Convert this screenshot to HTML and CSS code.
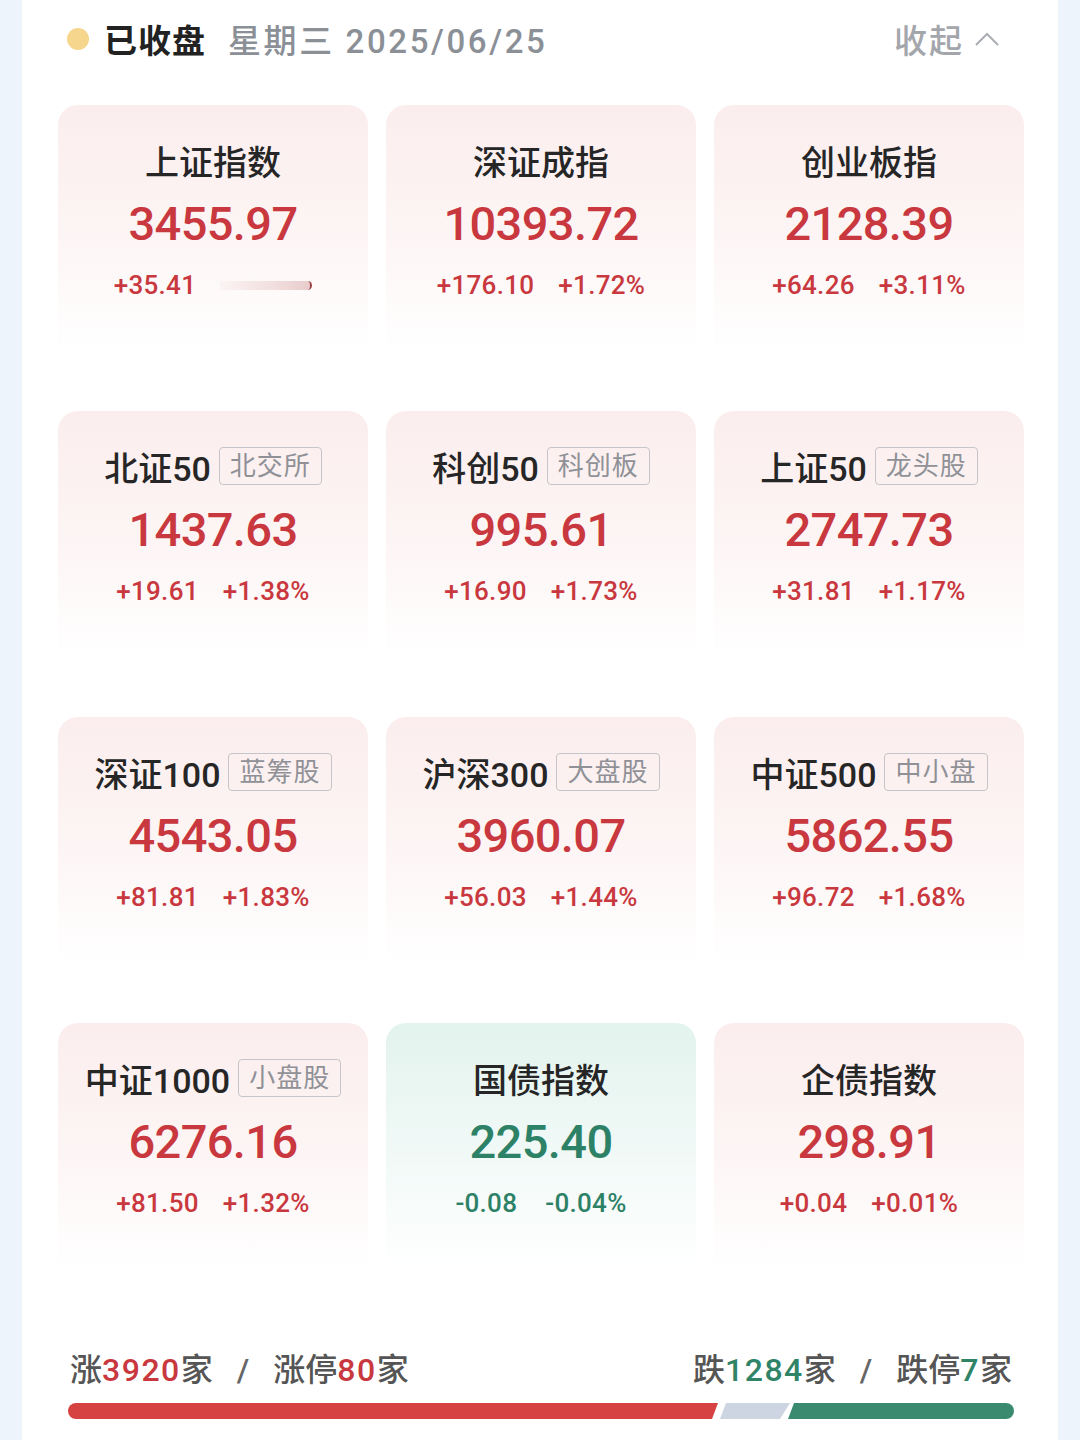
FILE: index.html
```html
<!DOCTYPE html>
<html lang="zh-CN">
<head>
  <meta charset="UTF-8" />
  <meta name="viewport" content="width=device-width, initial-scale=1" />
  <title>大盘指数</title>
  <link rel="stylesheet" href="styles.css">
</head>
<body>

<div class="panel">
  <header class="top">
    <div class="status">
      <span class="dot"></span>
      <span class="closed">已收盘</span>
      <span class="date">星期三 2025/06/25</span>
    </div>
    <a href="#" class="fold">收起
      <svg width="26" height="18" viewBox="0 0 26 18"><path d="M2 15 L13 4 L24 15" fill="none" stroke="#aaadb3" stroke-width="2"/></svg>
    </a>
  </header>

  <section class="grid">
    <div class="card up">
      <div class="name">上证指数</div>
      <div class="value">3455.97</div>
      <div class="change"><span>+35.41</span><span class="loading"></span></div>
    </div>
    <div class="card up">
      <div class="name">深证成指</div>
      <div class="value">10393.72</div>
      <div class="change"><span>+176.10</span><span>+1.72%</span></div>
    </div>
    <div class="card up">
      <div class="name">创业板指</div>
      <div class="value">2128.39</div>
      <div class="change"><span>+64.26</span><span>+3.11%</span></div>
    </div>

    <div class="card up">
      <div class="name">北证50<span class="tag">北交所</span></div>
      <div class="value">1437.63</div>
      <div class="change"><span>+19.61</span><span>+1.38%</span></div>
    </div>
    <div class="card up">
      <div class="name">科创50<span class="tag">科创板</span></div>
      <div class="value">995.61</div>
      <div class="change"><span>+16.90</span><span>+1.73%</span></div>
    </div>
    <div class="card up">
      <div class="name">上证50<span class="tag">龙头股</span></div>
      <div class="value">2747.73</div>
      <div class="change"><span>+31.81</span><span>+1.17%</span></div>
    </div>

    <div class="card up">
      <div class="name">深证100<span class="tag">蓝筹股</span></div>
      <div class="value">4543.05</div>
      <div class="change"><span>+81.81</span><span>+1.83%</span></div>
    </div>
    <div class="card up">
      <div class="name">沪深300<span class="tag">大盘股</span></div>
      <div class="value">3960.07</div>
      <div class="change"><span>+56.03</span><span>+1.44%</span></div>
    </div>
    <div class="card up">
      <div class="name">中证500<span class="tag">中小盘</span></div>
      <div class="value">5862.55</div>
      <div class="change"><span>+96.72</span><span>+1.68%</span></div>
    </div>

    <div class="card up">
      <div class="name">中证1000<span class="tag">小盘股</span></div>
      <div class="value">6276.16</div>
      <div class="change"><span>+81.50</span><span>+1.32%</span></div>
    </div>
    <div class="card down">
      <div class="name">国债指数</div>
      <div class="value">225.40</div>
      <div class="change"><span>-0.08</span><span>-0.04%</span></div>
    </div>
    <div class="card up">
      <div class="name">企债指数</div>
      <div class="value">298.91</div>
      <div class="change"><span>+0.04</span><span>+0.01%</span></div>
    </div>
  </section>

  <section class="breadth">
    <div class="counts">
      <div>涨<b class="red">3920</b>家<i>/</i>涨停<b class="red">80</b>家</div>
      <div>跌<b class="green">1284</b>家<i>/</i>跌停<b class="green">7</b>家</div>
    </div>
    <div class="bar">
      <span class="seg-up" style="width: 650px"></span>
      <span class="seg-flat" style="width: 74px"></span>
      <span class="seg-down"></span>
    </div>
  </section>
</div>

</body>
</html>
```

FILE: styles.css
```css
body {
  margin: 0;
  background: #eef4fc;
  font-family: Roboto, "Noto Sans CJK SC", sans-serif;
  color: #222;
}
.panel {
  width: 1036px;
  margin-left: 22px;
  height: 1440px;
  background: #fff;
  box-sizing: border-box;
  padding: 0 34px 0 36px;
}
.top {
  display: flex;
  justify-content: space-between;
  align-items: center;
  height: 78px;
  padding: 0 24px 0 9px;
  margin-bottom: 27px;
}
.status {
  display: flex;
  align-items: center;
  font-size: 33px;
  letter-spacing: 1px;
}
.dot {
  width: 22px;
  height: 22px;
  border-radius: 50%;
  background: #f6d58c;
  margin-right: 15px;
}
.closed {
  font-weight: 700;
  color: #222;
  margin-right: 22px;
}
.date {
  color: #8b8f96;
  font-weight: 500;
  letter-spacing: 2.6px;
}
.fold {
  display: flex;
  align-items: center;
  gap: 10px;
  color: #a3a6ab;
  text-decoration: none;
  font-size: 33px;
  font-weight: 500;
  letter-spacing: 2px;
}
.grid {
  display: grid;
  grid-template-columns: repeat(3, 310px);
  column-gap: 18px;
  row-gap: 16px;
}
.card {
  height: 290px;
  border-radius: 20px;
  text-align: center;
  box-sizing: border-box;
  padding-top: 35px;
}
.card.up {
  background: linear-gradient(180deg, #fbeded 0%, #fdf5f5 45%, #fff 85%);
}
.card.down {
  background: linear-gradient(180deg, #e3f3ee 0%, #f1f9f7 45%, #fff 85%);
}
.name {
  display: flex;
  justify-content: center;
  align-items: center;
  gap: 8px;
  height: 40px;
  font-size: 34px;
  font-weight: 500;
  color: #262626;
}
.tag {
  font-size: 26px;
  font-weight: 400;
  color: #8f9197;
  border: 1.5px solid #c4c5c9;
  border-radius: 4px;
  padding: 0 10px;
  line-height: 36px;
  letter-spacing: 1px;
}
.value {
  margin-top: 16px;
  line-height: 56px;
  font-size: 47px;
  font-weight: 500;
  letter-spacing: -0.6px;
}
.change {
  margin-top: 17px;
  display: flex;
  justify-content: center;
  align-items: center;
  gap: 24px;
  line-height: 32px;
  font-size: 26px;
  font-weight: 500;
  letter-spacing: 0.3px;
}
.up .value, .up .change {
  color: #c8383e;
}
.down .value, .down .change {
  color: #2d8166;
}
.down .change {
  gap: 28px;
}
.loading {
  width: 92px;
  height: 9px;
  border-radius: 0 5px 5px 0;
  background: linear-gradient(90deg, rgba(240,220,220,0.2), #f2dede 60%, #e8cccc);
  border-right: 2px solid #9b3b40;
  box-sizing: border-box;
}
.breadth {
  margin-top: 31px;
}
.counts {
  display: flex;
  justify-content: space-between;
  padding: 0 12px 0 12px;
  font-size: 32px;
  color: #555;
  font-weight: 500;
}
.counts b {
  font-weight: 500;
  letter-spacing: 1.5px;
}
.counts i {
  font-style: normal;
  color: #666;
  margin: 0 24px;
}
.red {
  color: #c8383e;
}
.green {
  color: #2f8468;
}
.bar {
  display: flex;
  height: 16px;
  margin: 13px 10px 0 10px;
}
.bar span {
  display: block;
  height: 100%;
}
.seg-up {
  background: #d64242;
  border-radius: 8px 0 0 8px;
  clip-path: polygon(0 0, 100% 0, calc(100% - 6px) 100%, 0 100%);
}
.seg-flat {
  background: #cdd5e2;
  margin-left: -2px;
  clip-path: polygon(10px 0, 100% 0, calc(100% - 10px) 100%, 4px 100%);
}
.seg-down {
  flex: 1;
  background: #3a8a70;
  margin-left: -6px;
  border-radius: 0 8px 8px 0;
  clip-path: polygon(10px 0, 100% 0, 100% 100%, 4px 100%);
}
```
